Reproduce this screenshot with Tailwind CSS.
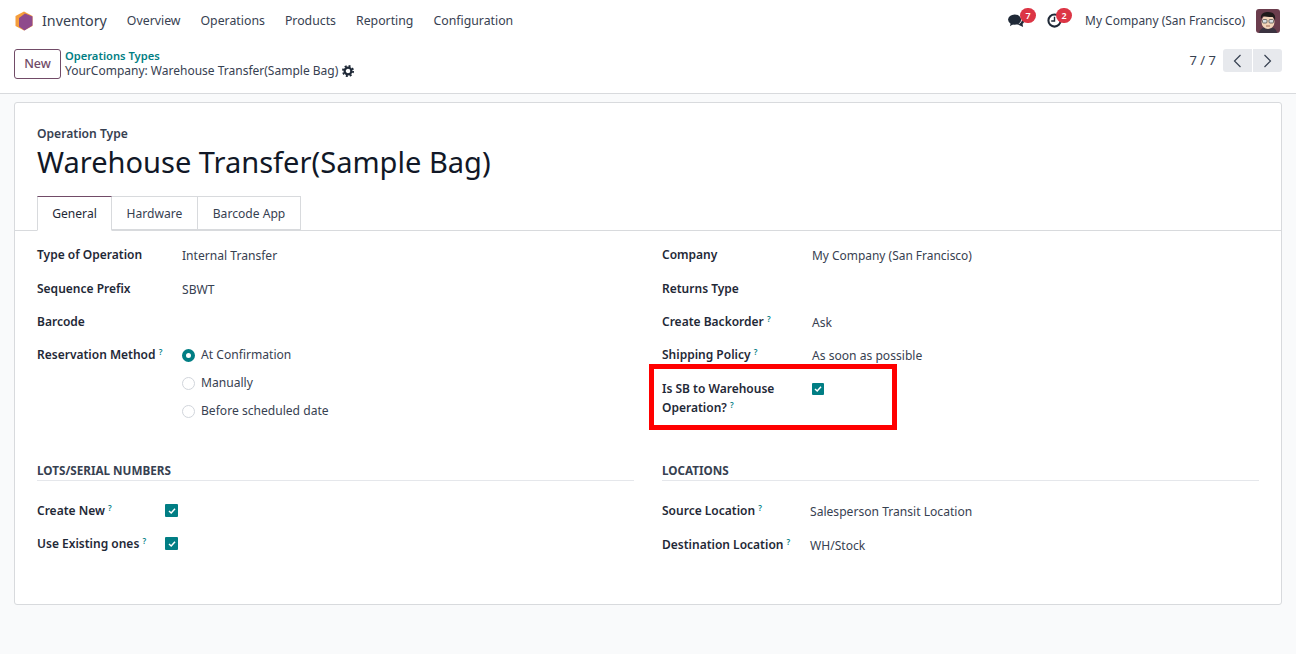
<!DOCTYPE html>
<html lang="en">
  <head>
    <meta charset="UTF-8" />
    <title>Inventory</title>
    <script src="https://cdn.jsdelivr.net/npm/@tailwindcss/browser@4"></script>
  </head>
  <body class="h-[654px] overflow-hidden bg-[#f9fafb] font-['Noto_Sans',sans-serif] text-[12.1px] text-[#374151]">
    <!-- top nav -->
    <nav class="h-10 bg-white flex items-center pl-[15px] pr-4 pt-[1px]">
      <svg width="18" height="20" viewBox="0 0 18 20" class="mr-[9px]">
        <polygon points="9,0.5 17.5,5 17.5,15 9,19.5 0.5,15 0.5,5" fill="#f59e3c" />
        <polygon points="10,2.500 17.500,5.500 17.500,14.500 9.500,19.500 4,15.500 4,7" fill="#8f4a8c" />
      </svg>
      <span class="text-[14.3px] mr-[20px]">Inventory</span>
      <div class="flex gap-[20px] text-[12.3px] pt-[1px]">
        <span>Overview</span>
        <span>Operations</span>
        <span>Products</span>
        <span>Reporting</span>
        <span>Configuration</span>
      </div>
      <div class="ml-auto flex items-center">
        <div class="relative mr-[22px]">
          <svg width="17" height="15" viewBox="0 0 18 16" fill="#1f2937">
            <ellipse cx="7" cy="7" rx="7" ry="5.5" />
            <path d="M3 10 L2 14 L7 11 Z" />
            <path d="M15 6 C17 7 18 10 15.500 11.500 L16 15 L11.500 12.800 L9 12.500 C12 12 15 10 15 6 Z" />
          </svg>
          <span class="absolute -top-[5px] left-[12px] w-[16px] h-[15px] rounded-full bg-[#dc3545] text-white text-[9px] font-semibold leading-[15px] text-center">7</span>
        </div>
        <div class="relative mr-[23px]">
          <svg width="15" height="15" viewBox="0 0 16 16" fill="none" stroke="#1f2937" stroke-width="2.200">
            <circle cx="8" cy="8" r="6.500" />
            <path d="M8 4 V8.500 H4.500" stroke-width="1.500" />
          </svg>
          <span class="absolute -top-[5px] left-[9px] w-[16px] h-[15px] rounded-full bg-[#dc3545] text-white text-[9px] font-semibold leading-[15px] text-center">2</span>
        </div>
        <span class="mr-[11px] text-[11.95px] pt-[1px]">My Company (San Francisco)</span>
        <svg width="24" height="24" viewBox="0 0 24 24" class="rounded-[3px]">
          <rect width="24" height="24" fill="#6b3d4d" />
          <path d="M3 24 C4 19 8 18 12 18 C16 18 20 19 21 24 Z" fill="#3b3340" />
          <ellipse cx="12" cy="13" rx="6.500" ry="7" fill="#f2d3b8" />
          <path d="M5 10 C4 4 9 3 12 3 C17 3 20 5 19 11 L17 8 C13 8 9 8 7 7 Z" fill="#1f1a1a" />
          <rect x="6.500" y="10.500" width="4.500" height="3.500" rx="1" fill="#d9dde0" stroke="#444" stroke-width="0.700" />
          <rect x="13" y="10.500" width="4.500" height="3.500" rx="1" fill="#d9dde0" stroke="#444" stroke-width="0.700" />
          <path d="M10 17 H14" stroke="#8a4b3a" stroke-width="0.800" />
        </svg>
      </div>
    </nav>

    <!-- control panel -->
    <div class="h-[54px] bg-white border-b border-[#d8dadd] flex items-start pl-[14px] pr-[14px] pt-[9px]">
      <button class="h-[30px] w-[47px] border border-[#714b67] rounded-[3px] text-[#714b67] font-medium text-[12.5px]">New</button>
      <div class="ml-[4px] -mt-[1px] leading-[15px]">
        <div class="text-[#017e84] font-semibold text-[11.15px]">Operations Types</div>
        <div class="flex items-center gap-[4px] text-[12px]">
          <span>YourCompany: Warehouse Transfer(Sample Bag)</span>
          <svg width="12" height="12" viewBox="0 0 16 16" fill="none" stroke="#1f2937">
            <circle cx="8" cy="8" r="4.500" stroke-width="3" />
            <circle cx="8" cy="8" r="6.800" stroke-width="2.400" stroke-dasharray="2.670 2.670" />
          </svg>
        </div>
      </div>
      <div class="ml-auto flex items-center">
        <span class="mr-[7px] text-[13px]">7 / 7</span>
        <div class="flex gap-[1px]">
          <div class="w-[29px] h-[23px] bg-[#e7e9ed] rounded-l-[3px] flex items-center justify-center">
            <svg width="9" height="14" viewBox="0 0 9 14" fill="none" stroke="#374151" stroke-width="1.200"><path d="M7.500 1 L1.500 7 L7.500 13" /></svg>
          </div>
          <div class="w-[29px] h-[23px] bg-[#e7e9ed] rounded-r-[3px] flex items-center justify-center">
            <svg width="9" height="14" viewBox="0 0 9 14" fill="none" stroke="#374151" stroke-width="1.200"><path d="M1.500 1 L7.500 7 L1.500 13" /></svg>
          </div>
        </div>
      </div>
    </div>

    <!-- form sheet -->
    <div class="mx-[14px] mt-2 h-[503px] bg-white border border-[#d8dadd] rounded-[3px] pt-[23px]">
      <div class="px-[22px]">
        <div class="font-semibold text-[12.1px] leading-[16px] text-[#374151]">Operation Type</div>
        <h1 class="text-[29.05px] leading-[38px] mt-[1px] text-[#111827]">Warehouse Transfer(Sample Bag)</h1>
      </div>

      <!-- tabs -->
      <div class="mt-[15px] h-[35px] border-b border-[#d8dadd] flex pl-[22px]">
        <div class="h-[35px] w-[75px] pt-[1px] bg-white border border-[#d8dadd] border-t-[#714b67] border-b-white flex items-center justify-center text-[#1f2937]">General</div>
        <div class="h-[34px] w-[86px] pt-[2px] border-y border-r border-[#d8dadd] flex items-center justify-center">Hardware</div>
        <div class="h-[34px] w-[103px] pt-[2px] border-y border-r border-[#d8dadd] flex items-center justify-center">Barcode App</div>
      </div>

      <div class="px-[22px] pt-[8px]">
        <div class="grid grid-cols-2 gap-x-[28px]">
          <!-- left group -->
          <div>
            <div class="flex h-[34px] items-center"><b class="w-[145px] font-semibold text-[12px] text-[#1f2937] mb-[2px]">Type of Operation</b><span>Internal Transfer</span></div>
            <div class="flex h-[33px] items-center"><b class="w-[145px] font-semibold text-[12px] text-[#1f2937] mb-[2px]">Sequence Prefix</b><span class="pt-[2px]">SBWT</span></div>
            <div class="flex h-[33px] items-center"><b class="w-[145px] font-semibold text-[12px] text-[#1f2937] mb-[2px]">Barcode</b></div>
            <div class="flex pt-[7px]">
              <b class="w-[145px] font-semibold text-[12px] text-[#1f2937]">Reservation Method <sup class="text-[8px] text-[#017e84]">?</sup></b>
              <div class="flex flex-col gap-[10px]">
                <div class="flex items-center gap-[6px] h-[18px]">
                  <span class="w-[13px] h-[13px] rounded-full border-[4px] border-[#017e84] bg-white"></span>At Confirmation
                </div>
                <div class="flex items-center gap-[6px] h-[18px]">
                  <span class="w-[13px] h-[13px] rounded-full border border-[#d1d5db] bg-white"></span>Manually
                </div>
                <div class="flex items-center gap-[6px] h-[18px]">
                  <span class="w-[13px] h-[13px] rounded-full border border-[#d1d5db] bg-white"></span>Before scheduled date
                </div>
              </div>
            </div>
          </div>

          <!-- right group -->
          <div>
            <div class="flex h-[34px] items-center"><b class="w-[150px] font-semibold text-[12px] text-[#1f2937] mb-[2px]">Company</b><span class="text-[11.95px]">My Company (San Francisco)</span></div>
            <div class="flex h-[33px] items-center"><b class="w-[150px] font-semibold text-[12px] text-[#1f2937] mb-[2px]">Returns Type</b></div>
            <div class="flex h-[33px] items-center"><b class="w-[150px] font-semibold text-[12px] text-[#1f2937] mb-[2px]">Create Backorder <sup class="text-[8px] text-[#017e84]">?</sup></b><span class="pt-[2px]">Ask</span></div>
            <div class="flex h-[33px] items-center"><b class="w-[150px] font-semibold text-[12px] text-[#1f2937] mb-[2px]">Shipping Policy <sup class="text-[8px] text-[#017e84]">?</sup></b><span class="pt-[2px]">As soon as possible</span></div>
            <div class="flex relative pt-[7px]">
              <b class="w-[150px] font-semibold text-[12px] text-[#1f2937] leading-[19px] pr-[30px]">Is SB to Warehouse Operation? <sup class="text-[8px] text-[#017e84]">?</sup></b>
              <span class="w-[12px] h-[12px] mt-[4px] bg-[#017e84] rounded-[1px] flex items-center justify-center">
                <svg width="8" height="8" viewBox="0 0 8 8" fill="none" stroke="#fff" stroke-width="1.500"><path d="M1 4 L3.200 6 L7 1.800" /></svg>
              </span>
              <div class="absolute left-[-13px] top-[-8px] w-[248px] h-[66px] border-[5px] border-[#ff0000]"></div>
            </div>
          </div>
        </div>

        <div class="grid grid-cols-2 gap-x-[28px] mt-[41px]">
          <div>
            <div class="border-b border-[#e5e7eb] h-[20px] font-bold text-[11.7px] text-[#374151] leading-[18px]">LOTS/SERIAL NUMBERS</div>
            <div class="flex h-[33px] items-center mt-[13px]">
              <b class="w-[128px] font-semibold text-[12px] text-[#1f2937]">Create New <sup class="text-[8px] text-[#017e84]">?</sup></b>
              <span class="w-[13px] h-[13px] bg-[#017e84] rounded-[1px] flex items-center justify-center">
                <svg width="8" height="8" viewBox="0 0 8 8" fill="none" stroke="#fff" stroke-width="1.500"><path d="M1 4 L3.200 6 L7 1.800" /></svg>
              </span>
            </div>
            <div class="flex h-[33px] items-center">
              <b class="w-[128px] font-semibold text-[12px] text-[#1f2937]">Use Existing ones <sup class="text-[8px] text-[#017e84]">?</sup></b>
              <span class="w-[13px] h-[13px] bg-[#017e84] rounded-[1px] flex items-center justify-center">
                <svg width="8" height="8" viewBox="0 0 8 8" fill="none" stroke="#fff" stroke-width="1.500"><path d="M1 4 L3.200 6 L7 1.800" /></svg>
              </span>
            </div>
          </div>
          <div>
            <div class="border-b border-[#e5e7eb] h-[20px] font-bold text-[11.7px] text-[#374151] leading-[18px]">LOCATIONS</div>
            <div class="flex h-[34px] items-center mt-[13px]"><b class="w-[148px] font-semibold text-[12px] text-[#1f2937]">Source Location <sup class="text-[8px] text-[#017e84]">?</sup></b><span class="pt-[2px]">Salesperson Transit Location</span></div>
            <div class="flex h-[34px] items-center"><b class="w-[148px] font-semibold text-[12px] text-[#1f2937]">Destination Location <sup class="text-[8px] text-[#017e84]">?</sup></b><span class="pt-[2px]">WH/Stock</span></div>
          </div>
        </div>
      </div>
    </div>
  </body>
</html>
